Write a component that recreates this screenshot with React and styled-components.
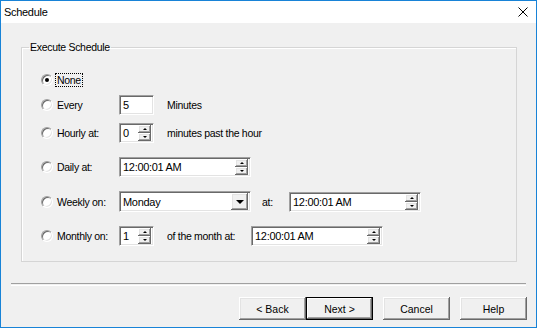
import React from 'react';
import styled, { createGlobalStyle, css } from 'styled-components';

const GlobalStyle = createGlobalStyle`
  html, body {
    margin: 0;
    padding: 0;
    background: #fff;
  }
  body {
    font-family: "Liberation Sans", Arial, sans-serif;
    font-size: 10.5px;
    letter-spacing: -0.3px;
    color: #000;
  }
`;

/* classic 3D edges */
const sunken = css`
  box-sizing: border-box;
  background: #fff;
  border: 1px solid;
  border-color: #a0a0a0 #fff #fff #a0a0a0;
  box-shadow: inset 1px 1px 0 #696969, inset -1px -1px 0 #e3e3e3;
`;

const raised = css`
  box-sizing: border-box;
  background: #f0f0f0;
  box-shadow: inset -1px -1px 0 #696969, inset 1px 1px 0 #fff,
    inset -2px -2px 0 #a0a0a0, inset 2px 2px 0 #e3e3e3;
`;

const Window = styled.div`
  box-sizing: border-box;
  width: 537px;
  height: 328px;
  border: 1px solid #1883d7;
  background: #f0f0f0;
  display: flex;
  flex-direction: column;
`;

const TitleBar = styled.div`
  height: 22px;
  background: #fff;
  display: flex;
  align-items: center;
  justify-content: space-between;
  padding: 0 8px 0 3px;
  font-size: 11px;
`;

const Close = styled.svg`
  width: 10px;
  height: 10px;
`;

const Group = styled.fieldset`
  margin: 18px 19px 0 20px;
  padding: 0 0 15px 19px;
  height: 221px;
  box-sizing: border-box;
  border: 1px solid #d5d5d5;
  box-shadow: inset 1px 1px 0 #fff;
`;

const Legend = styled.legend`
  margin-left: -12px;
  padding: 0 1px;
  line-height: 13px;
`;

const Row = styled.div`
  display: flex;
  align-items: center;
  height: 21px;
  margin-top: ${(p) => p.$gap}px;
`;

const Choice = styled.label`
  width: 78px;
  flex: none;
  display: flex;
  align-items: center;
  gap: 4px;
`;

const Radio = styled.span`
  box-sizing: border-box;
  width: 12px;
  height: 12px;
  border-radius: 50%;
  background: #fff;
  border: 1px solid;
  border-color: #a0a0a0 #fff #fff #a0a0a0;
  box-shadow: inset 1px 1px 0 #696969, inset -1px -1px 0 #e3e3e3;
  display: flex;
  align-items: center;
  justify-content: center;

  &::after {
    content: '';
    width: 4px;
    height: 4px;
    border-radius: 50%;
    background: ${(p) => (p.$checked ? '#000' : 'transparent')};
  }
`;

const Focus = styled.span`
  outline: 1px dotted #000;
  outline-offset: 0;
  padding: 0 1px;
  margin-left: -1px;
`;

const Note = styled.span`
  flex: none;
  margin-left: ${(p) => p.$gap}px;
  width: ${(p) => (p.$w ? `${p.$w}px` : 'auto')};
`;

const Field = styled.div`
  ${sunken};
  width: ${(p) => p.$w}px;
  height: 20px;
  display: flex;
  align-items: center;
  padding: 0 2px 0 3px;
  flex: none;
`;

const Value = styled.span`
  flex: 1;
  font-size: 11px;
`;

const Spinner = styled.div`
  display: flex;
  flex-direction: column;
  width: 13px;
  height: 16px;
`;

const SpinButton = styled.div`
  ${raised};
  height: 8px;
  display: flex;
  align-items: center;
  justify-content: center;

  &::after {
    content: '';
    border-left: 2px solid transparent;
    border-right: 2px solid transparent;
    ${(p) =>
      p.$up ? 'border-bottom: 2px solid #000;' : 'border-top: 2px solid #000;'}
  }
`;

const Combo = styled(Field)`
  height: 21px;
  padding-right: 2px;
`;

const DropButton = styled.div`
  ${raised};
  width: 17px;
  height: 17px;
  display: flex;
  align-items: center;
  justify-content: center;

  &::after {
    content: '';
    border-left: 4px solid transparent;
    border-right: 4px solid transparent;
    border-top: 4px solid #000;
    margin-top: 1px;
  }
`;

const Separator = styled.div`
  margin: 21px 10px 0 10px;
  height: 1px;
  border-top: 1px solid #a0a0a0;
  border-bottom: 1px solid #fff;
`;

const Buttons = styled.div`
  display: flex;
  justify-content: flex-end;
  padding-right: 9px;
  margin-top: 11px;
`;

const Button = styled.button`
  ${raised};
  width: 67px;
  height: 23px;
  border: none;
  font: inherit;
  padding: 0;
  margin-left: ${(p) => p.$gap || 0}px;
  ${(p) =>
    p.$default &&
    css`
      box-shadow: inset 0 0 0 1px #000, inset -2px -2px 0 #696969,
        inset 2px 2px 0 #fff, inset -3px -3px 0 #a0a0a0;
    `}
`;

const Spin = () => (
  <Spinner>
    <SpinButton $up />
    <SpinButton />
  </Spinner>
);

const Option = ({ label, checked, focused }) => (
  <Choice>
    <Radio $checked={checked} />
    {focused ? <Focus>{label}</Focus> : <span>{label}</span>}
  </Choice>
);

const TimeField = () => (
  <Field $w={132}>
    <Value>12:00:01 AM</Value>
    <Spin />
  </Field>
);

const App = () => (
  <>
    <GlobalStyle />
    <Window>
      <TitleBar>
        <span>Schedule</span>
        <Close viewBox="0 0 10 10">
          <path d="M0.5 0.5 L9.5 9.5 M9.5 0.5 L0.5 9.5" stroke="#000" strokeWidth="1" fill="none" />
        </Close>
      </TitleBar>

      <Group>
        <Legend>Execute Schedule</Legend>
        <Row $gap={15}>
          <Option label="None" checked focused />
        </Row>
        <Row $gap={4}>
          <Option label="Every" />
          <Field $w={35}>
            <Value>5</Value>
          </Field>
          <Note $gap={13}>Minutes</Note>
        </Row>
        <Row $gap={7}>
          <Option label="Hourly at:" />
          <Field $w={35}>
            <Value>0</Value>
            <Spin />
          </Field>
          <Note $gap={13}>minutes past the hour</Note>
        </Row>
        <Row $gap={13}>
          <Option label="Daily at:" />
          <TimeField />
        </Row>
        <Row $gap={14}>
          <Option label="Weekly on:" />
          <Combo $w={132}>
            <Value>Monday</Value>
            <DropButton />
          </Combo>
          <Note $gap={11} $w={27}>at:</Note>
          <TimeField />
        </Row>
        <Row $gap={13}>
          <Option label="Monthly on:" />
          <Field $w={35}>
            <Value>1</Value>
            <Spin />
          </Field>
          <Note $gap={13} $w={84}>of the month at:</Note>
          <TimeField />
        </Row>
      </Group>

      <Separator />
      <Buttons>
        <Button>&lt; Back</Button>
        <Button $default>Next &gt;</Button>
        <Button $gap={10}>Cancel</Button>
        <Button $gap={10}>Help</Button>
      </Buttons>
    </Window>
  </>
);

export default App;
